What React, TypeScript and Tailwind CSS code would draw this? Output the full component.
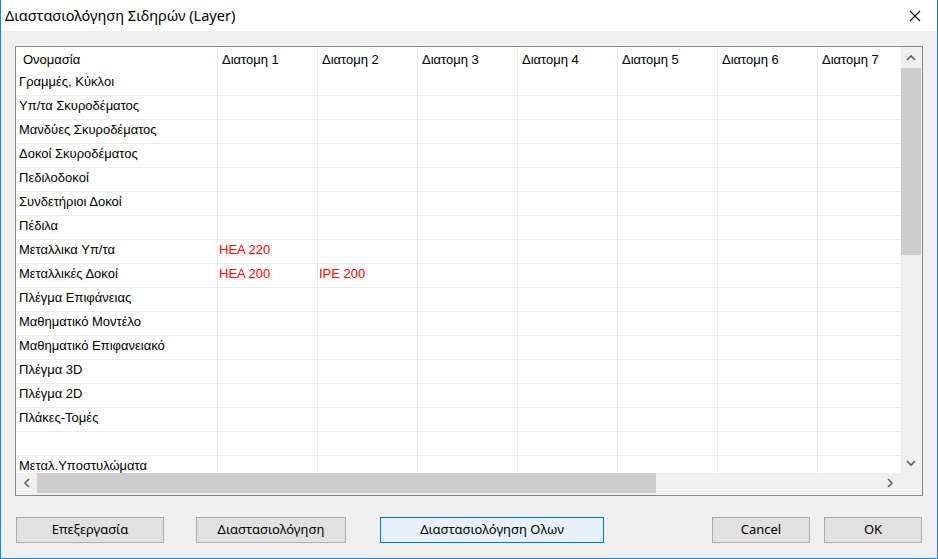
import React from "react";

const rows: { name: string; cells: string[] }[] = [
  { name: "Γραμμές, Κύκλοι", cells: [] },
  { name: "Υπ/τα Σκυροδέματος", cells: [] },
  { name: "Μανδύες Σκυροδέματος", cells: [] },
  { name: "Δοκοί Σκυροδέματος", cells: [] },
  { name: "Πεδιλοδοκοί", cells: [] },
  { name: "Συνδετήριοι Δοκοί", cells: [] },
  { name: "Πέδιλα", cells: [] },
  { name: "Μεταλλικα Υπ/τα", cells: ["HEA 220"] },
  { name: "Μεταλλικές Δοκοί", cells: ["HEA 200", "IPE 200"] },
  { name: "Πλέγμα Επιφάνειας", cells: [] },
  { name: "Μαθηματικό Μοντέλο", cells: [] },
  { name: "Μαθηματικό Επιφανειακό", cells: [] },
  { name: "Πλέγμα 3D", cells: [] },
  { name: "Πλέγμα 2D", cells: [] },
  { name: "Πλάκες-Τομές", cells: [] },
  { name: "", cells: [] },
  { name: "Μεταλ.Υποστυλώματα", cells: [] },
];

const cols = [1, 2, 3, 4, 5, 6, 7];

const Chevron = ({ dir }: { dir: "up" | "down" | "left" | "right" }) => {
  const pts =
    dir === "up"
      ? "1,6 5,2 9,6"
      : dir === "down"
      ? "1,2 5,6 9,2"
      : dir === "left"
      ? "6,1 2,5 6,9"
      : "2,1 6,5 2,9";
  const w = dir === "up" || dir === "down" ? 10 : 8;
  const h = dir === "up" || dir === "down" ? 8 : 10;
  return (
    <svg width={w} height={h} viewBox={`0 0 ${w} ${h}`}>
      <polyline points={pts} fill="none" stroke="#606060" strokeWidth="1.6" />
    </svg>
  );
};

export default function App() {
  const grid = "font-['Liberation_Sans',Arial,sans-serif] text-[13px] text-black";
  const ui = "font-['Noto_Sans','Open_Sans',sans-serif] text-[13px] text-black";
  return (
    <div className="w-[938px] h-[559px] flex flex-col border-l border-r border-b border-[#1883d7] bg-[#f0f0f0] overflow-hidden">
      {/* title bar */}
      <div className="h-[31px] bg-white flex items-center justify-between pl-[4px] pr-[16px]">
        <span className="font-['Noto_Sans','Open_Sans',sans-serif] text-[14.5px] text-black leading-none">
          Διαστασιολόγηση Σιδηρών (Layer)
        </span>
        <svg width="12" height="12" viewBox="0 0 12 12">
          <path d="M1 1 L11 11 M11 1 L1 11" stroke="#111" strokeWidth="1.1" />
        </svg>
      </div>
      {/* body */}
      <div className="flex-1 flex flex-col pl-[14px] pt-[15px]">
        <div className="w-[908px] h-[450px] border border-[#828790] bg-[#f0f0f0] flex flex-col">
          <div className="flex h-[426px]">
            {/* grid content */}
            <div className={`w-[885px] h-[426px] bg-white overflow-hidden ${grid}`}>
              <div className="w-[1000px]">
                {/* header */}
                <div className="flex h-[25px]">
                  <div className="w-[202px] shrink-0 border-r border-[#ebebeb] pl-[7px] pt-[1px] leading-[24px] h-[25px]">
                    Ονομασία
                  </div>
                  {cols.map((c) => (
                    <div
                      key={c}
                      className="w-[100px] shrink-0 border-r border-[#ebebeb] pl-[4px] pt-[1px] leading-[24px] h-[25px] whitespace-nowrap"
                    >
                      Διατομη {c}
                    </div>
                  ))}
                </div>
                {rows.map((r, i) => (
                  <div key={i} className="flex h-[24px] border-b border-[#ebebeb]">
                    <div className="w-[202px] shrink-0 border-r border-[#ebebeb] pl-[3px] leading-[19px] whitespace-nowrap">
                      {r.name}
                    </div>
                    {cols.map((c, j) => (
                      <div
                        key={c}
                        className="w-[100px] shrink-0 border-r border-[#ebebeb] pl-[1px] leading-[19px] text-[#ff0000] whitespace-nowrap"
                      >
                        {r.cells[j] ?? ""}
                      </div>
                    ))}
                  </div>
                ))}
              </div>
            </div>
            {/* vertical scrollbar */}
            <div className="w-[20px] h-[426px] flex flex-col bg-[#f0f0f0]">
              <div className="h-[21px] flex items-center justify-center">
                <Chevron dir="up" />
              </div>
              <div className="h-[187px] bg-[#cdcdcd]" />
              <div className="flex-1" />
              <div className="h-[20px] flex items-center justify-center">
                <Chevron dir="down" />
              </div>
            </div>
          </div>
          {/* horizontal scrollbar */}
          <div className="flex h-[20px]">
            <div className="w-[21px] flex items-center justify-center">
              <Chevron dir="left" />
            </div>
            <div className="w-[619px] bg-[#cdcdcd]" />
            <div className="w-[245px] flex items-center justify-end pr-[7px]">
              <Chevron dir="right" />
            </div>
          </div>
        </div>
        {/* buttons */}
        <div className={`flex mt-[21px] ${ui}`}>
          <button className="ml-[1px] w-[148px] h-[26px] border border-[#adadad] bg-[#e1e1e1]">
            Επεξεργασία
          </button>
          <button className="ml-[32px] w-[150px] h-[26px] border border-[#adadad] bg-[#e1e1e1]">
            Διαστασιολόγηση
          </button>
          <button className="ml-[34px] w-[224px] h-[26px] border border-[#0078d7] bg-[#e5f1fb]">
            Διαστασιολόγηση Ολων
          </button>
          <button className="ml-[108px] w-[98px] h-[26px] border border-[#adadad] bg-[#e1e1e1]">
            Cancel
          </button>
          <button className="ml-[14px] w-[98px] h-[26px] border border-[#adadad] bg-[#e1e1e1]">
            OK
          </button>
        </div>
      </div>
    </div>
  );
}
